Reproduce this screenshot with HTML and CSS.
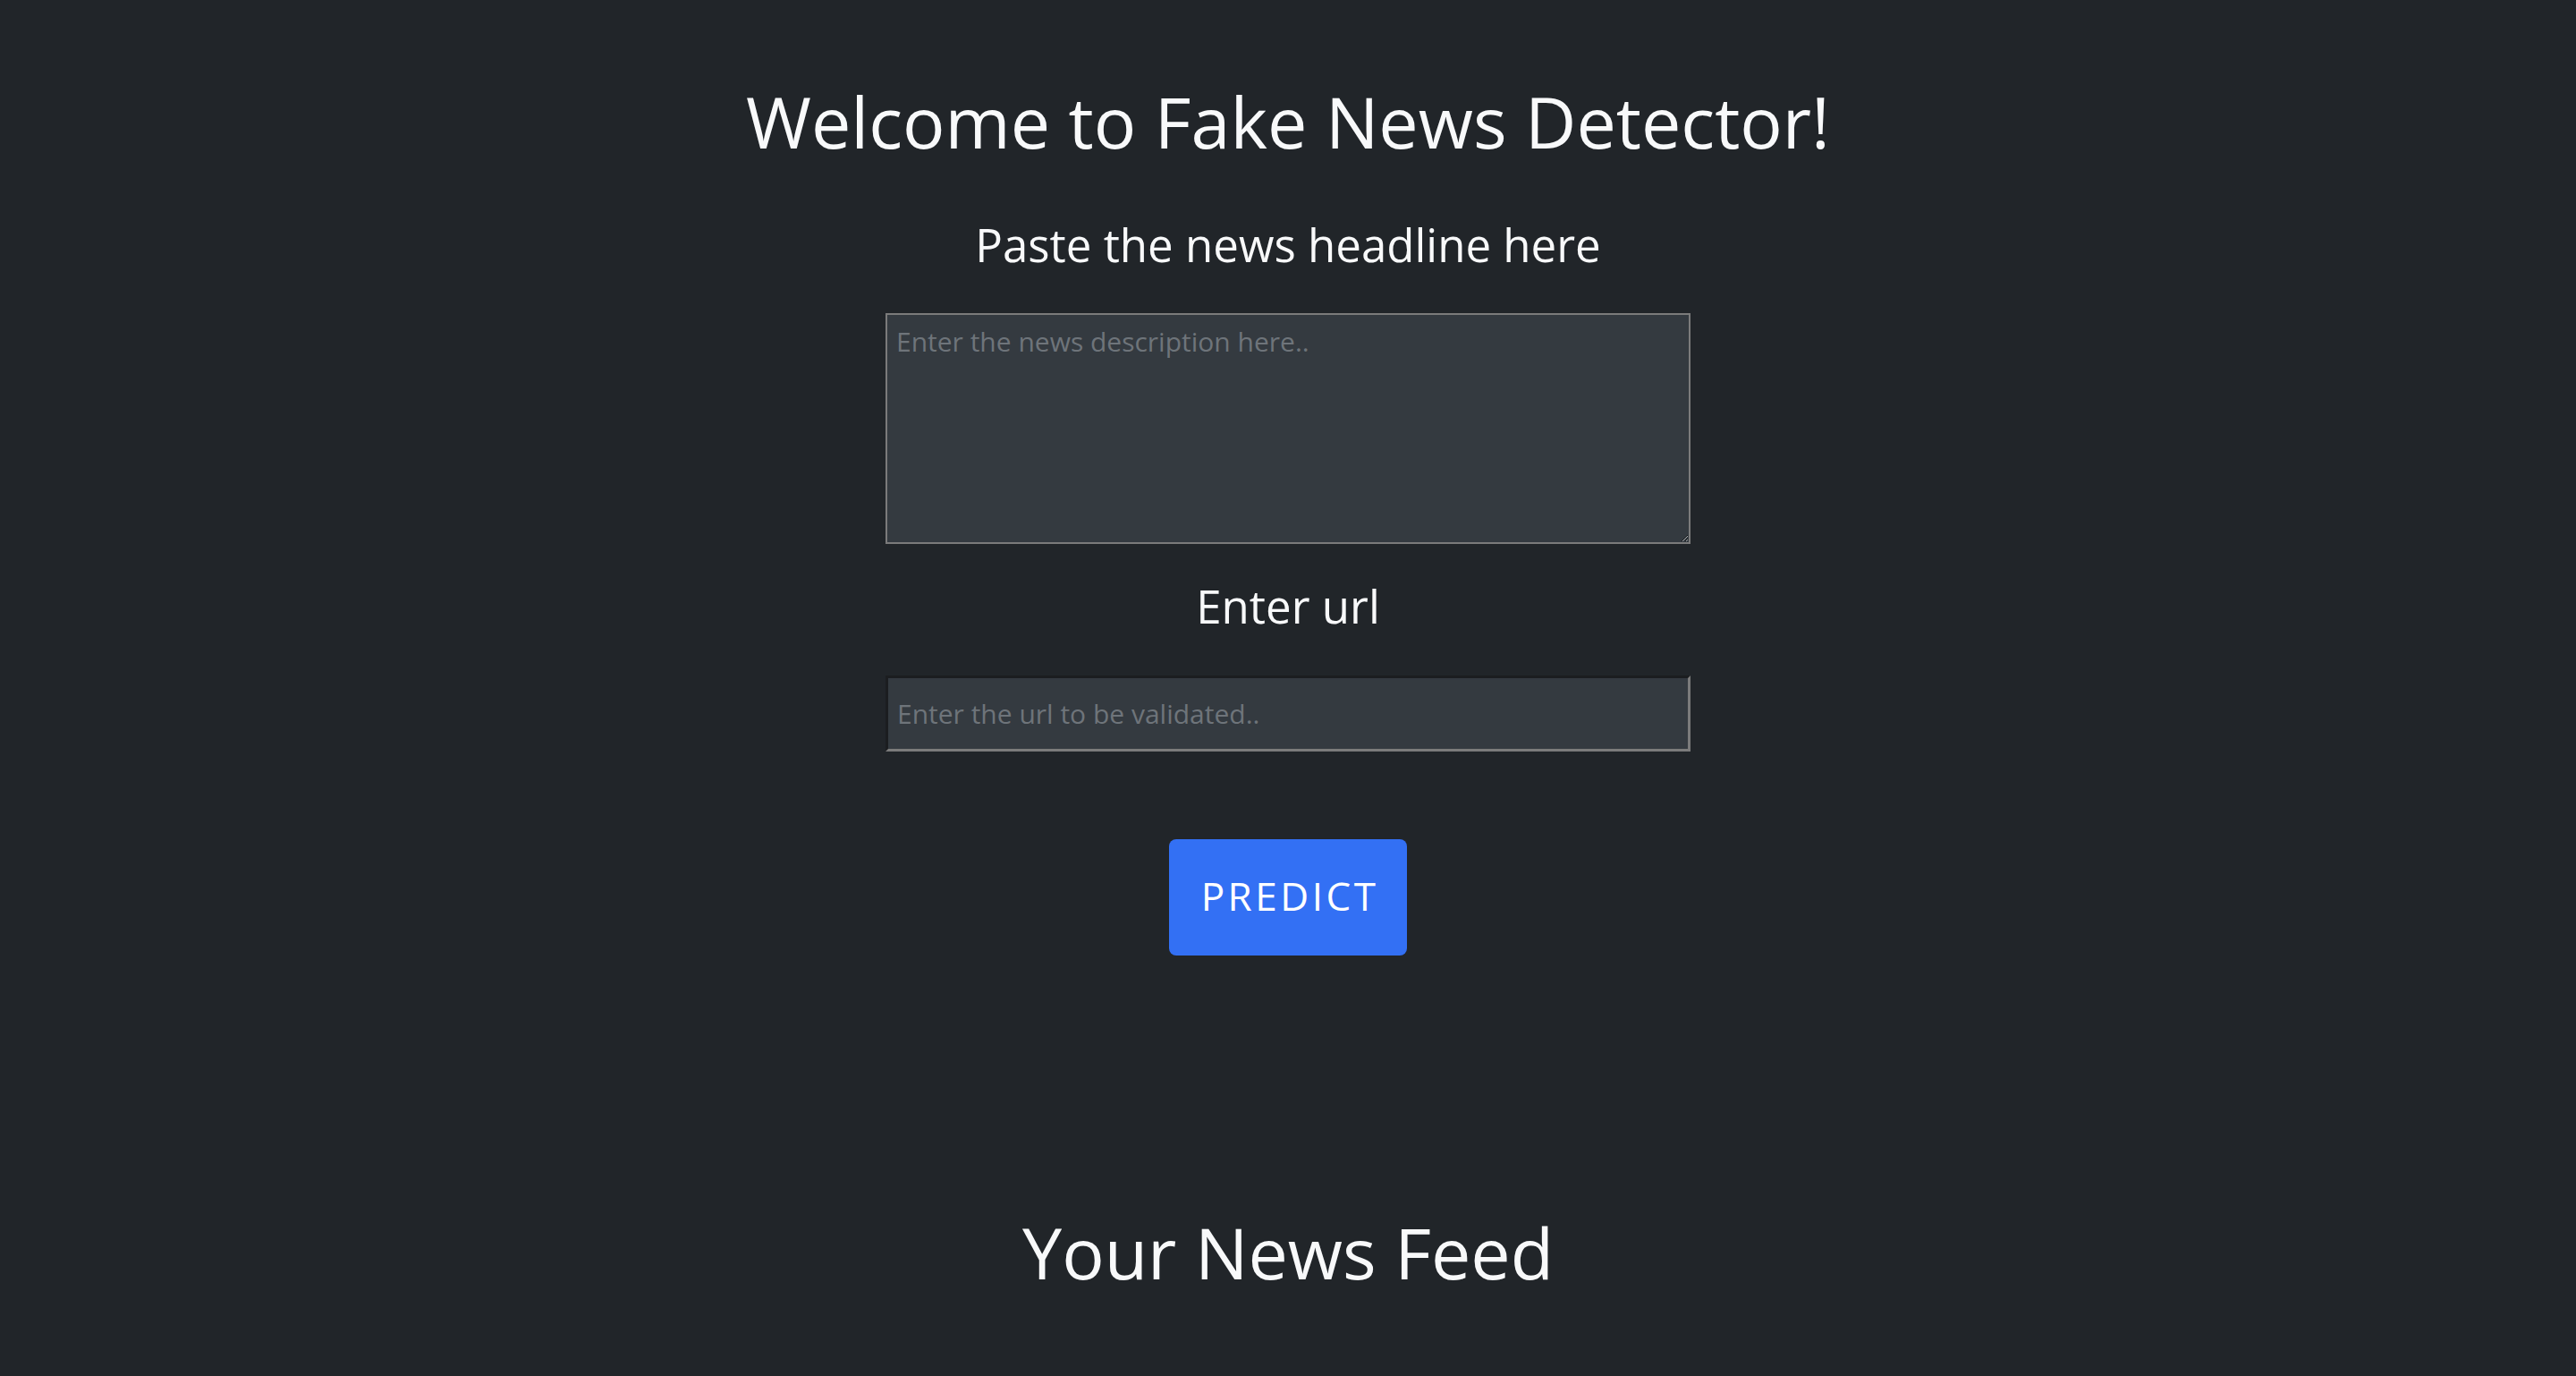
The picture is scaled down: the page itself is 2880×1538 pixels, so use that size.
FILE: index.html
```html
<!DOCTYPE html>
<html lang="en">
<head>
<meta charset="utf-8">
<title>Fake News Detector</title>
<link rel="stylesheet" href="styles.css">
</head>
<body>
<main class="page">
  <h1 class="title">Welcome to Fake News Detector!</h1>
  <form class="form">
    <h3 class="label label-news">Paste the news headline here</h3>
    <textarea class="news" placeholder="Enter the news description here.."></textarea>
    <h3 class="label label-url">Enter url</h3>
    <input class="url" type="text" placeholder="Enter the url to be validated..">
    <button class="btn" type="button">PREDICT</button>
  </form>
  <h1 class="title feed">Your News Feed</h1>
</main>
</body>
</html>
```
FILE: styles.css
```css
html, body {
  margin: 0;
  padding: 0;
  background: #212529;
  color: #f8f9fa;
  font-family: "Open Sans", "Noto Sans", sans-serif;
}
.page {
  display: flex;
  flex-direction: column;
  align-items: center;
  text-align: center;
}
.title {
  margin: 89px 0 0;
  font-size: 79px;
  font-weight: 400;
  line-height: 1.2;
}
.form {
  display: flex;
  flex-direction: column;
  align-items: center;
}
.label {
  font-size: 51px;
  font-weight: 400;
  line-height: 1.2;
  margin: 0;
}
.label-news { margin-top: 59px; }
.label-url { margin-top: 39px; }
.news {
  box-sizing: border-box;
  width: 900px;
  height: 258px;
  margin-top: 46px;
  background: #343a40;
  border: 2px solid #7b7b7b;
  color: #f8f9fa;
  font-family: "Open Sans", sans-serif;
  font-size: 30px;
  padding: 9px 10px;
}
.news::placeholder, .url::placeholder { color: #6e747a; }
.url {
  box-sizing: border-box;
  width: 900px;
  height: 85px;
  margin-top: 47px;
  background: #343a40;
  border: 3px solid;
  border-color: #1b1d20 #7b7b7b #7b7b7b #1b1d20;
  color: #f8f9fa;
  font-family: "Open Sans", sans-serif;
  font-size: 30px;
  padding: 0 10px;
}
.btn {
  margin-top: 98px;
  width: 266px;
  height: 130px;
  padding: 0 0 4px 4px;
  border: 0;
  border-radius: 8px;
  background: #3370f4;
  color: #fff;
  font-family: "Open Sans", sans-serif;
  font-size: 44px;
  letter-spacing: 3.5px;
}
.feed { margin-top: 285px; }
```
